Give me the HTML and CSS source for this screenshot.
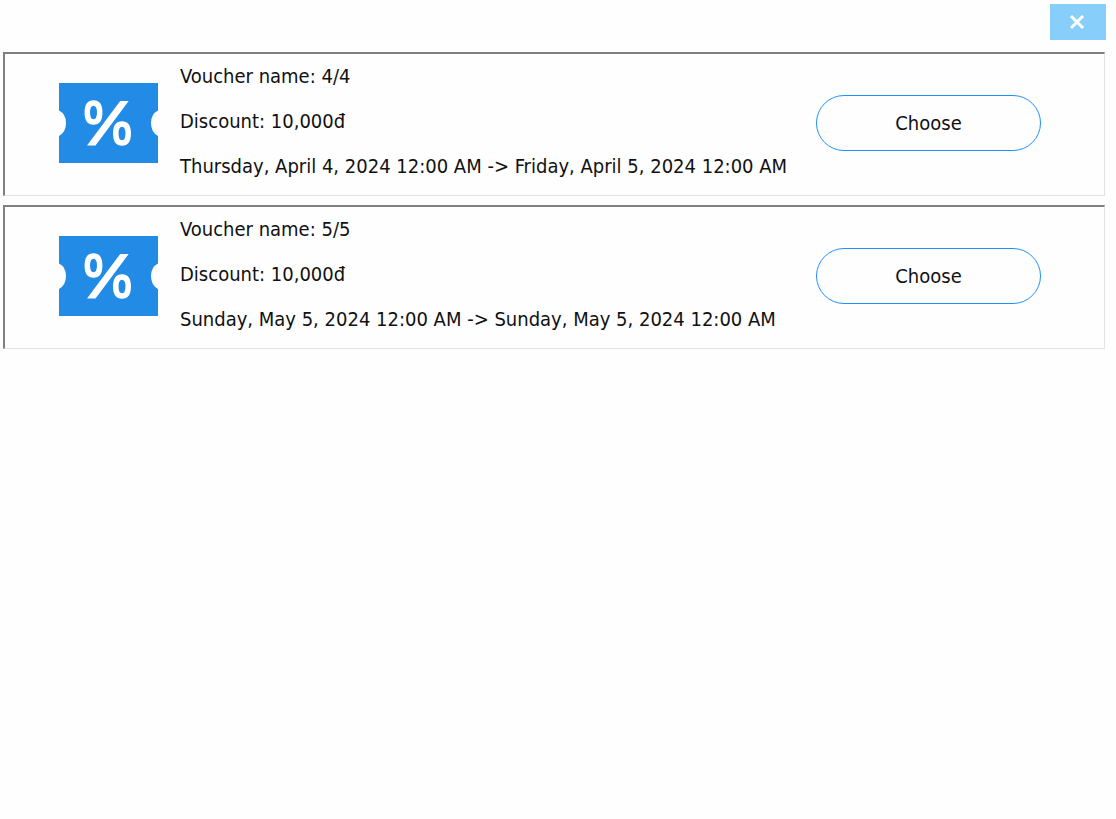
FILE: index.html
```html
<!DOCTYPE html>
<html lang="en">
<head>
<meta charset="utf-8">
<title>Choose a voucher</title>
<link rel="stylesheet" href="styles.css">
</head>
<body>
<svg class="symbols" aria-hidden="true">
  <symbol id="voucher" viewBox="0 0 99 80">
    <path fill="#228be6" d="M0 0H99V27.500Q92 31 92 40T99 53V80H0V53Q7 49 7 40T0 27.500Z"/>
    <g fill="none" stroke="#fff" stroke-width="5.500">
      <path d="M34.500 20C38.500 20 40.700 23 40.700 29.500S38.500 39 34.500 39S28.300 36 28.300 29.500S30.500 20 34.500 20Z"/>
      <path d="M63 41C67 41 69.200 44 69.200 50.500S67 60 63 60S56.800 57 56.800 50.500S59 41 63 41Z"/>
    </g>
    <path fill="#fff" d="M61.200 18H69.700L36.500 62.500H28Z"/>
  </symbol>
</svg>
<header class="top">
  <button class="close" type="button" aria-label="Close">
    <svg class="close-icon" viewBox="0 0 16 16"><path d="M2 2L14 14M14 2L2 14"/></svg>
  </button>
</header>
<main class="list">
  <article class="card">
    <svg class="voucher" aria-hidden="true"><use href="#voucher"/></svg>
    <div class="info">
      <p>Voucher name: 4/4</p>
      <p>Discount: 10,000đ</p>
      <p>Thursday, April 4, 2024 12:00 AM -&gt; Friday, April 5, 2024 12:00 AM</p>
    </div>
    <button class="choose" type="button">Choose</button>
  </article>
  <article class="card">
    <svg class="voucher" aria-hidden="true"><use href="#voucher"/></svg>
    <div class="info">
      <p>Voucher name: 5/5</p>
      <p>Discount: 10,000đ</p>
      <p>Sunday, May 5, 2024 12:00 AM -&gt; Sunday, May 5, 2024 12:00 AM</p>
    </div>
    <button class="choose" type="button">Choose</button>
  </article>
</main>
</body>
</html>
```
FILE: styles.css
```css
* { box-sizing: border-box; }
body {
  margin: 0;
  background: #fefefe;
  color: #111;
  font-family: Tahoma, "DejaVu Sans Condensed", "DejaVu Sans", sans-serif;
  font-size: 20px;
}
.symbols { display: none; }
.top {
  display: flex;
  justify-content: flex-end;
  padding: 4px 10px 12px;
}
.close {
  display: flex;
  align-items: center;
  justify-content: center;
  width: 56px;
  height: 36px;
  padding: 0 2px 0 0;
  border: 0;
  background: #87cefa;
}
.close-icon {
  width: 16px;
  height: 16px;
  fill: none;
  stroke: #fff;
  stroke-width: 3;
}
.list {
  display: flex;
  flex-direction: column;
  gap: 9px;
  padding: 0 11px 0 3px;
}
.card {
  display: flex;
  align-items: center;
  padding: 0 63px 3px 54px;
  border: 2px solid #808080;
  border-right: 1px solid #e3e3e3;
  border-bottom: 1px solid #e3e3e3;
}
.voucher {
  flex: none;
  width: 99px;
  height: 80px;
}
.info {
  flex: 1;
  padding: 0 0 3px 22px;
  white-space: nowrap;
}
.info p {
  margin: 0;
  line-height: 45px;
}
.choose {
  flex: none;
  width: 225px;
  height: 56px;
  padding: 0;
  border: 1px solid #1e90ff;
  border-radius: 28px;
  background: #fefefe;
  color: inherit;
  font: inherit;
}
```
